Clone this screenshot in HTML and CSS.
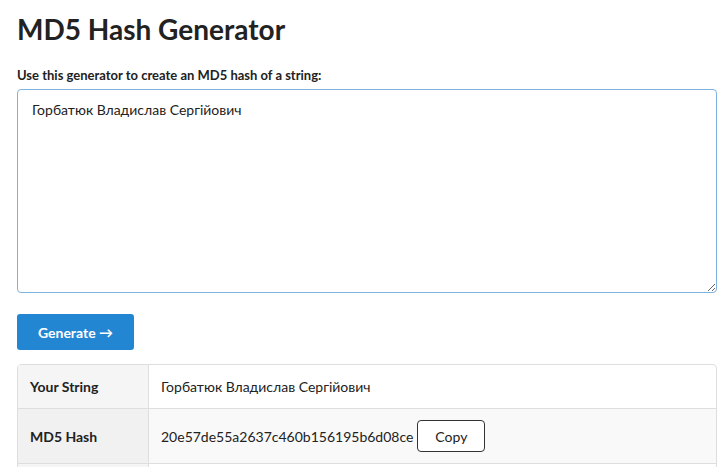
FILE: index.html
```html
<!DOCTYPE html>
<html>
<head>
<meta charset="utf-8">
<link rel="stylesheet" href="styles.css">
</head>
<body>
<main class="page">
  <h1 class="title">MD5 Hash Generator</h1>
  <label class="label" for="src">Use this generator to create an MD5 hash of a string:</label>
  <textarea id="src" class="input">Горбатюк Владислав Сергійович</textarea>
  <button class="btn-generate">Generate →</button>
  <table class="result">
    <tr>
      <th>Your String</th>
      <td>Горбатюк Владислав Сергійович</td>
    </tr>
    <tr class="alt">
      <th>MD5 Hash</th>
      <td><span class="hash">20e57de55a2637c460b156195b6d08ce</span><button class="btn-copy">Copy</button></td>
    </tr>
    <tr>
      <th>SHA1 Hash</th>
      <td>—</td>
    </tr>
  </table>
</main>
</body>
</html>
```
FILE: styles.css
```css
html, body {
  margin: 0;
  padding: 0;
  background: #fff;
}
body {
  font-family: Lato, "Open Sans", sans-serif;
  color: #222;
}
.page {
  padding: 0 1px 0 17px;
  display: flex;
  flex-direction: column;
  align-items: flex-start;
}
.title {
  font-size: 28px;
  font-weight: 700;
  margin: 10px 0 0;
  line-height: 38px;
  color: #222;
}
.label {
  font-size: 13px;
  font-weight: 700;
  margin-top: 19px;
  line-height: 16px;
  color: #222;
}
.input {
  box-sizing: border-box;
  width: 100%;
  height: 204px;
  margin-top: 6px;
  padding: 10px 14px;
  font-family: Lato, sans-serif;
  font-size: 14px;
  line-height: 20px;
  color: #222;
  border: 1px solid #7fb2dd;
  border-radius: 4px;
  outline: none;
  resize: both;
}
.btn-generate {
  margin-top: 21px;
  width: 117px;
  height: 36px;
  background: #2386d3;
  color: #fff;
  border: none;
  border-radius: 3px;
  font-family: Lato, sans-serif;
  font-size: 14px;
  font-weight: 700;
}
.result {
  margin-top: 14px;
  width: 100%;
  border-collapse: separate;
  border-spacing: 0;
  border: 1px solid #dedede;
  border-radius: 4px;
  font-size: 14px;
  color: #222;
}
.result th, .result td {
  padding: 11px 12px;
  line-height: 21px;
  text-align: left;
  vertical-align: middle;
  border-top: 1px solid #dedede;
}
.result tr:first-child th, .result tr:first-child td {
  border-top: none;
}
.result th {
  width: 106px;
  background: #f5f5f5;
  font-weight: 700;
  border-right: 1px solid #dedede;
}
.result tr.alt th {
  background: #f1f1f1;
}
.result tr.alt td {
  background: #f9f9f9;
}
.hash {
  vertical-align: middle;
}
.btn-copy {
  margin-left: 4px;
  width: 68px;
  height: 32px;
  background: #fff;
  border: 1px solid #333;
  border-radius: 4px;
  font-family: Lato, sans-serif;
  font-size: 14px;
  color: #222;
  vertical-align: middle;
}
```
